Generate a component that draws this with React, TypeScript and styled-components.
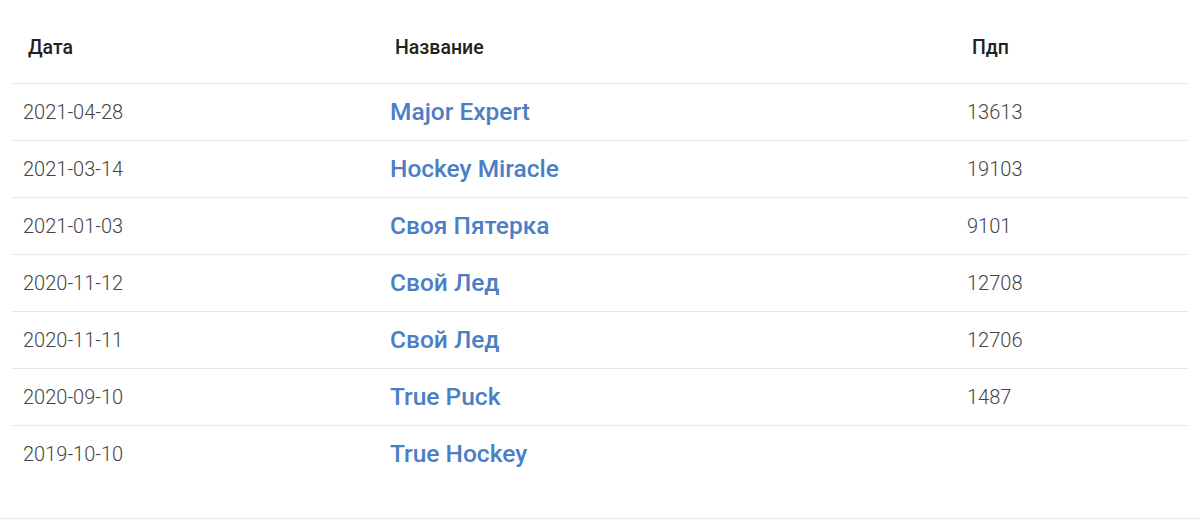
import styled, { createGlobalStyle } from "styled-components";

type Entry = {
  date: string;
  title: string;
  pdp?: string;
};

const entries: Entry[] = [
  { date: "2021-04-28", title: "Major Expert", pdp: "13613" },
  { date: "2021-03-14", title: "Hockey Miracle", pdp: "19103" },
  { date: "2021-01-03", title: "Своя Пятерка", pdp: "9101" },
  { date: "2020-11-12", title: "Свой Лед", pdp: "12708" },
  { date: "2020-11-11", title: "Свой Лед", pdp: "12706" },
  { date: "2020-09-10", title: "True Puck", pdp: "1487" },
  { date: "2019-10-10", title: "True Hockey" }
];

export default function App() {
  return (
    <>
      <GlobalStyle />
      <Page>
        <Table>
          <colgroup>
            <col style={{ width: 367 }} />
            <col style={{ width: 577 }} />
            <col />
          </colgroup>
          <thead>
            <tr>
              <HeadCell>Дата</HeadCell>
              <HeadCell>Название</HeadCell>
              <HeadCell>Пдп</HeadCell>
            </tr>
          </thead>
          <tbody>
            {entries.map((e, i) => (
              <Row key={i}>
                <Cell>{e.date}</Cell>
                <Cell>
                  <TitleLink href="#">{e.title}</TitleLink>
                </Cell>
                <Cell>{e.pdp ?? ""}</Cell>
              </Row>
            ))}
          </tbody>
        </Table>
      </Page>
      <Divider />
    </>
  );
}

const GlobalStyle = createGlobalStyle`
  html, body {
    margin: 0;
    padding: 0;
    background: #ffffff;
    font-family: Roboto, "Noto Sans", sans-serif;
  }
`;

const Page = styled.div`
  padding: 0 12px;
  height: 518px;
  box-sizing: border-box;
`;

const Table = styled.table`
  width: 100%;
  border-collapse: collapse;
  table-layout: fixed;
`;

const HeadCell = styled.th`
  height: 83px;
  padding: 13px 16px 0;
  text-align: left;
  font-size: 19.5px;
  font-weight: 500;
  color: #222222;
  border-bottom: 1px solid #e8e8ee;
  box-sizing: border-box;
`;

const Row = styled.tr`
  border-bottom: 1px solid #e8e8ee;

  &:last-child {
    border-bottom: none;
  }
`;

const Cell = styled.td`
  height: 57px;
  padding: 0 11px;
  font-size: 20px;
  font-weight: 300;
  color: #444444;
  box-sizing: border-box;
`;

const TitleLink = styled.a`
  font-size: 24.5px;
  font-weight: 500;
  color: #4c7ec6;
  text-decoration: none;
`;

const Divider = styled.div`
  height: 1px;
  background: #e8e8ee;
`;
